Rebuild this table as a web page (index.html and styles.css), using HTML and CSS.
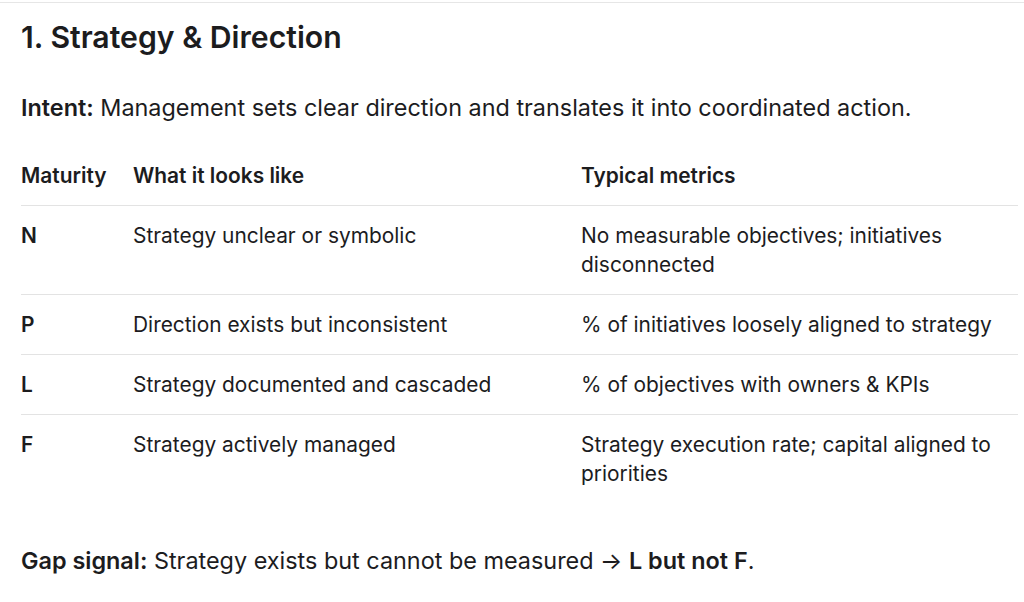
FILE: index.html
```html
<!DOCTYPE html>
<html lang="en">
<head>
<meta charset="utf-8">
<title>Strategy &amp; Direction</title>
<link rel="stylesheet" href="styles.css">
</head>
<body>
<main class="page">
  <h2 class="title">1. Strategy &amp; Direction</h2>
  <p class="intent"><strong>Intent:</strong> Management sets clear direction and translates it into coordinated action.</p>
  <table class="grid">
    <thead>
      <tr>
        <th class="c1">Maturity</th>
        <th class="c2">What it looks like</th>
        <th class="c3">Typical metrics</th>
      </tr>
    </thead>
    <tbody>
      <tr>
        <td class="lvl">N</td>
        <td>Strategy unclear or symbolic</td>
        <td>No measurable objectives; initiatives disconnected</td>
      </tr>
      <tr>
        <td class="lvl">P</td>
        <td>Direction exists but inconsistent</td>
        <td>% of initiatives loosely aligned to strategy</td>
      </tr>
      <tr>
        <td class="lvl">L</td>
        <td>Strategy documented and cascaded</td>
        <td>% of objectives with owners &amp; KPIs</td>
      </tr>
      <tr>
        <td class="lvl">F</td>
        <td>Strategy actively managed</td>
        <td>Strategy execution rate; capital aligned to priorities</td>
      </tr>
    </tbody>
  </table>
  <p class="gap"><strong>Gap signal:</strong> Strategy exists but cannot be measured → <strong>L but not F</strong>.</p>
</main>
</body>
</html>
```

FILE: styles.css
```css
html, body {
  margin: 0;
  padding: 0;
  background: #ffffff;
}
body {
  font-family: Inter, "Noto Sans", "Liberation Sans", sans-serif;
  color: #1c1c1e;
  border-top: 1px solid #e6e6e6;
  margin-top: 2px;
}
.page {
  padding: 0 6px 0 21px;
}
.title {
  margin: 0;
  padding-top: 16px;
  font-size: 30.2px;
  line-height: 36px;
  font-weight: 600;
  letter-spacing: 0;
}
.intent {
  margin: 38px 0 0;
  font-size: 23.4px;
  line-height: 30px;
}
.intent strong, .gap strong {
  font-weight: 600;
}
.grid {
  margin-top: 23px;
  width: 997px;
  border-collapse: collapse;
  table-layout: fixed;
  font-size: 20.9px;
  line-height: 29px;
}
.grid th, .grid td {
  text-align: left;
  vertical-align: top;
  padding: 15px 12px 15px 0;
}
.grid th {
  font-weight: 600;
  border-bottom: 1px solid #e3e3e3;
}
.grid tbody tr + tr td {
  border-top: 1px solid #e3e3e3;
}
.c1 { width: 100px; }
.c2 { width: 436px; }
.c3 { width: 425px; }
.lvl {
  font-weight: 600;
}
.gap {
  margin: 43px 0 0;
  font-size: 23.4px;
  line-height: 30px;
}
```
